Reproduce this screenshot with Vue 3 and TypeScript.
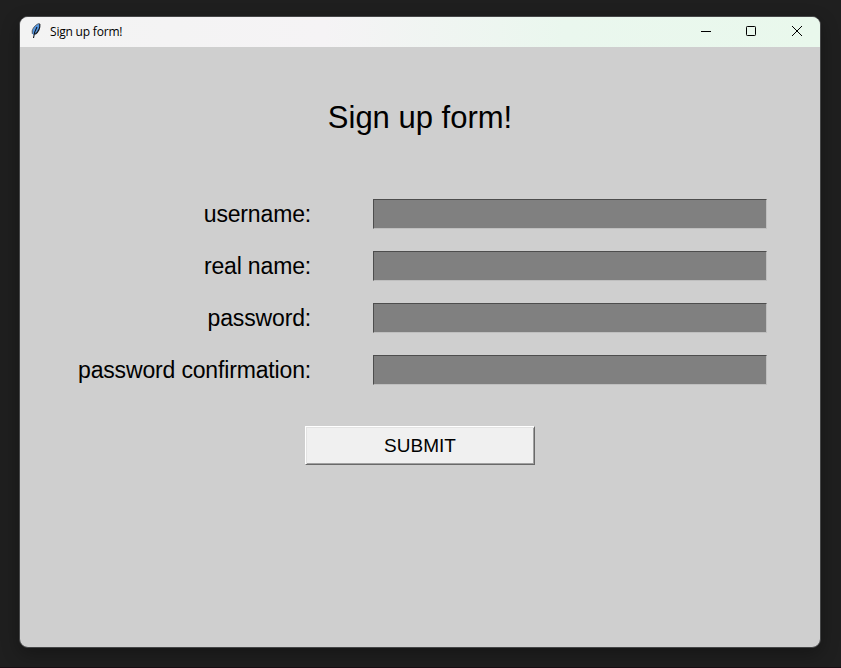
<script setup lang="ts">
import { reactive } from 'vue'

interface Field {
  key: string
  label: string
  type: string
}

const fields: Field[] = [
  { key: 'username', label: 'username:', type: 'text' },
  { key: 'realName', label: 'real name:', type: 'text' },
  { key: 'password', label: 'password:', type: 'password' },
  { key: 'confirmation', label: 'password confirmation:', type: 'password' },
]

const values = reactive<Record<string, string>>({
  username: '',
  realName: '',
  password: '',
  confirmation: '',
})
</script>

<template>
  <div class="desktop">
    <div class="window">
      <header class="titlebar">
        <svg class="feather" width="12" height="18" viewBox="0 0 12 18">
          <path d="M9.5 1.4 C6.8 1.8 3.2 5.2 2.2 8.8 L2.2 11.2 L3.4 13 L5.6 12 C8.2 9.8 10.2 5.5 9.5 1.4Z" fill="#5596e0" />
          <path d="M9.6 1.5 C6.8 1.7 3.2 5 2.2 8.8 L2.3 11.8" fill="none" stroke="#4b4f55" stroke-width="0.9" />
          <path d="M9.8 2 C10.2 6 8.4 9.8 5.2 12.2" fill="none" stroke="#15191f" stroke-width="1.2" />
          <path d="M7 5 C5.2 8 4 11 3.5 16" fill="none" stroke="#10151c" stroke-width="1.1" />
        </svg>
        <span class="caption">Sign up form!</span>
        <div class="controls">
          <svg width="46" height="30" viewBox="0 0 46 30"><path d="M17 14.5H27" /></svg>
          <svg width="46" height="30" viewBox="0 0 46 30"><rect x="16.5" y="9.5" width="9" height="9" rx="0.8" /></svg>
          <svg width="46" height="30" viewBox="0 0 46 30"><path d="M17 9L27 19M27 9L17 19" /></svg>
        </div>
      </header>
      <form class="content" @submit.prevent>
        <h1>Sign up form!</h1>
        <div class="fields">
          <div v-for="field in fields" :key="field.key" class="row">
            <label :for="field.key">{{ field.label }}</label>
            <input :id="field.key" v-model="values[field.key]" :type="field.type" />
          </div>
        </div>
        <button type="submit">SUBMIT</button>
      </form>
    </div>
  </div>
</template>

<style>
body {
  margin: 0;
  background: #1e1e1e;
}
</style>

<style scoped>
.desktop {
  box-sizing: border-box;
  width: 841px;
  height: 668px;
  padding: 16px 20px 20px 19px;
  overflow: hidden;
  background: #1f1f1f;
  border-bottom: 1px solid #180e13;
}
.window {
  box-sizing: border-box;
  width: 802px;
  height: 632px;
  border: 1px solid #454647;
  border-radius: 9px;
  overflow: hidden;
  background: #cfcfcf;
  box-shadow: 0 6px 18px rgba(0, 0, 0, 0.3);
}
.titlebar {
  display: flex;
  height: 30px;
  background: linear-gradient(90deg, #f3f3f3 0%, #f5f3f5 38%, #eaf7ee 68%, #e9f8ec 100%);
}
.feather {
  margin: 5px 0 0 10px;
}
.caption {
  margin-left: 8px;
  font: 12px/30px "Open Sans", sans-serif;
  letter-spacing: -0.2px;
  color: #000;
}
.controls {
  display: flex;
  width: 136px;
  margin-left: auto;
}
.controls svg {
  flex: 0 0 auto;
  width: 46px;
  fill: none;
  stroke: #000;
  stroke-width: 1;
}
.controls svg:nth-child(2) {
  margin-right: -1px;
}
.content {
  display: flex;
  flex-direction: column;
  align-items: center;
  font-family: "Liberation Sans", sans-serif;
  color: #000;
}
h1 {
  margin: 53px 0 0;
  font-size: 31px;
  font-weight: 400;
  line-height: 36px;
  white-space: nowrap;
}
.fields {
  display: flex;
  flex-direction: column;
  gap: 22px;
  width: 800px;
  margin-top: 63px;
}
.row {
  display: flex;
  align-items: center;
  height: 30px;
}
label {
  width: 291px;
  text-align: right;
  font-size: 23px;
  letter-spacing: -0.16px;
  line-height: 30px;
  white-space: nowrap;
}
input {
  box-sizing: border-box;
  width: 394px;
  height: 30px;
  margin: 0 0 0 62px;
  padding: 2px 4px;
  border: 1px solid;
  border-color: #4d4d4d #bfbfbf #bfbfbf #4d4d4d;
  border-radius: 0;
  outline: none;
  background: #808080;
  font: 22px "Liberation Sans", sans-serif;
}
button {
  box-sizing: border-box;
  width: 230px;
  height: 39px;
  margin: 41px 0 0;
  padding: 0;
  border: 1px solid;
  border-color: #fff #696969 #696969 #fff;
  border-radius: 0;
  background: #f0f0f0;
  box-shadow: inset 1px 1px #e3e3e3, inset -1px -1px #a0a0a0;
  color: #000;
  font: 19px/35px "Liberation Sans", sans-serif;
}
</style>
